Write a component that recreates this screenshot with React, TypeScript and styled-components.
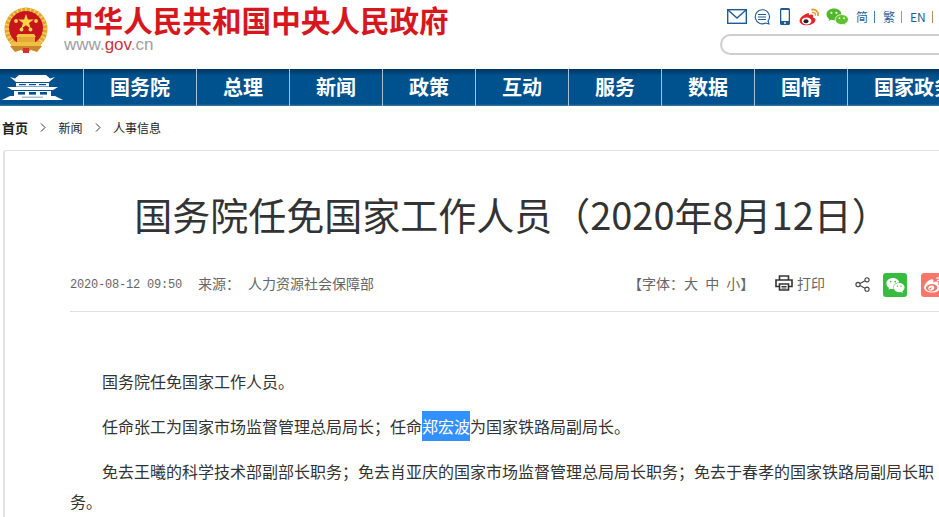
import {createGlobalStyle, styled} from "styled-components";
import {FaWeibo, FaWeixin} from "react-icons/fa";

const CJK = `"Noto Sans CJK SC", "Liberation Sans", sans-serif`;

const GlobalStyle = createGlobalStyle`
    html, body {
        margin: 0;
        padding: 0;
        background: #fff;
        overflow: hidden;
        font-family: ${CJK};
    }
`

const Page = styled.div`
    width: 939px;
    height: 517px;
    overflow: hidden;
`

const Wide = styled.div`
    width: 1012px;
`

const Header = styled.header`
    height: 69px;
    display: flex;
`

const Brand = styled.div`
    display: flex;
    flex: none;
    width: 720px;
    padding-left: 4px;
    box-sizing: border-box;
`

const EmblemBox = styled.div`
    padding-top: 7px;
    flex: none;
`

const Titles = styled.div`
    margin-left: 16px;
    padding-top: 2px;
`

const SiteName = styled.div`
    font-size: 29.6px;
    line-height: 36px;
    font-weight: 700;
    color: #d7161d;
    white-space: nowrap;
`

const SiteUrl = styled.div`
    font-family: "Liberation Sans", sans-serif;
    font-size: 17px;
    line-height: 14px;
    color: #a0a0a0;

    b {
        font-weight: 400;
        color: #c9343a;
    }
`

const Tools = styled.div`
    flex: none;
    width: 292px;
    padding-top: 7px;
`

const ToolRow = styled.div`
    height: 19px;
    display: flex;
    align-items: center;
    padding-left: 7px;
`

const ToolIcon = styled.svg<{$gap: number}>`
    display: block;
    flex: none;
    margin-right: ${(p) => p.$gap}px;
`

const Lang = styled.span`
    font-size: 12px;
    line-height: 19px;
    color: #1f5c94;
    width: 27px;
    flex: none;
`

const LangBar = styled.span<{$color: string}>`
    display: inline-block;
    width: 1px;
    height: 12px;
    margin-left: 6px;
    background: ${(p) => p.$color};
    vertical-align: -1px;
`

const SearchBox = styled.div`
    margin-top: 8px;
    height: 17px;
    width: 280px;
    border: 2px solid #cfcfcf;
    border-radius: 11px;
`

const Nav = styled.nav`
    height: 37px;
    display: flex;
    background: linear-gradient(#00345f 0, #00528f 7px, #00528f 35px, #3d7cab 37px);
`

const NavHome = styled.div`
    width: 83px;
    flex: none;
    padding: 6px 0 0 2px;
    box-sizing: border-box;
`

const NavItem = styled.div<{$width: number}>`
    width: ${(p) => p.$width}px;
    flex: none;
    border-left: 1px solid #a9bfd2;
    color: #fff;
    font-size: 20px;
    font-weight: 700;
    line-height: 35px;
    text-align: center;
    white-space: nowrap;
`

const Crumbs = styled.div`
    height: 42px;
    padding: 0 0 2px 2px;
    display: flex;
    align-items: center;
    font-size: 12px;
    color: #222;
`

const CrumbFirst = styled.span`
    font-size: 13px;
    font-weight: 700;
`

const Chevron = styled.svg`
    display: block;
    margin: 0 12.5px 0 12px;
`

const Card = styled.main`
    margin-left: 3px;
    width: 1008px;
    height: 400px;
    border: solid #e2e2e2;
    border-width: 1px 0 0 2px;
    border-radius: 3px 0 0 0;
    box-sizing: border-box;
    padding: 0 0 0 65px;
`

const Inner = styled.div`
    width: 874px;
`

const Title = styled.h1`
    margin: 0;
    padding: 34px 0 0 10px;
    height: 58px;
    line-height: 58px;
    font-size: 38px;
    font-weight: 400;
    color: #333;
    text-align: center;
    white-space: nowrap;
    box-sizing: content-box;
`

const Meta = styled.div`
    margin-top: 30px;
    height: 38px;
    border-bottom: 1px solid #e0e0e0;
    display: flex;
    align-items: flex-start;
    color: #666;
    font-size: 14px;
    line-height: 20px;
    box-sizing: content-box;
`

const MetaLeft = styled.div`
    width: 558px;
    flex: none;
    display: flex;
    white-space: nowrap;
`

const MetaDate = styled.span`
    font-family: "Liberation Mono", monospace;
    font-size: 12px;
    line-height: 24px;
    letter-spacing: -0.2px;
    width: 128px;
    flex: none;
`

const Source = styled.span`
    margin-left: 8px;
`

const FontSwitch = styled.div`
    width: 147px;
    flex: none;
    white-space: nowrap;
    word-spacing: 4px;
`

const Print = styled.div`
    width: 80px;
    flex: none;
    display: flex;
    align-items: center;
    gap: 4px;
`

const ShareGlyph = styled.svg`
    display: block;
    margin: 4px 13px 0 0;
    flex: none;
`

const SocialButton = styled.div<{$bg: string}>`
    width: 24px;
    height: 24px;
    flex: none;
    margin-right: 14px;
    border-radius: 3px;
    background: ${(p) => p.$bg};
    color: #fff;
    display: flex;
    align-items: center;
    justify-content: center;
    font-size: 19px;
`

const Article = styled.article`
    margin-top: 54px;
`

const Para = styled.p`
    margin: 0 0 15px;
    font-size: 16px;
    line-height: 30px;
    color: #333;
    text-indent: 32px;
`

const Selected = styled.span`
    display: inline-block;
    text-indent: 0;
    background: #3390ff;
    color: #fff;
`

function Emblem() {
    const rays = Array.from({length: 28}, (_, i) => (i * 360) / 28);
    return (
        <svg width="44" height="47" viewBox="0 0 44 47" style={{display: "block"}}>
            <ellipse cx="22" cy="22" rx="21.5" ry="21.5" fill="#e0a52c" />
            {rays.map((r) => (
                <rect key={r} x="21.3" y="0.5" width="1.4" height="5" fill="#f5d36a" transform={`rotate(${r} 22 22)`} />
            ))}
            <circle cx="22" cy="21" r="17" fill="#c8141c" />
            <polygon points="22,7 23.9,12.6 29.8,12.6 25,16.1 26.8,21.7 22,18.2 17.2,21.7 19,16.1 14.2,12.6 20.1,12.6" fill="#f8d648" />
            <circle cx="12" cy="14" r="1.9" fill="#f8d648" />
            <circle cx="32" cy="14" r="1.9" fill="#f8d648" />
            <circle cx="17.5" cy="22.5" r="1.9" fill="#f8d648" />
            <circle cx="26.5" cy="22.5" r="1.9" fill="#f8d648" />
            <polygon points="14,27 30,27 32,30 12,30" fill="#f2c544" />
            <rect x="13" y="30" width="18" height="5" fill="#e3ab33" />
            <rect x="7" y="35" width="30" height="4" fill="#f0bf45" />
            <path d="M6 39 L38 39 L33 45 L27 43 L22 46 L17 43 L11 45 Z" fill="#c9862a" />
            <rect x="19" y="41" width="6" height="5" fill="#d3322c" />
        </svg>
    );
}

function Gate() {
    return (
        <svg width="61" height="25" viewBox="0 0 61 25" style={{display: "block"}}>
            <path d="M8 2 L13 3.5 L17 0 L44 0 L48 3.5 L53 2 L47 7 L14 7 Z" fill="#fff" />
            <path d="M14 8 H47 V11.5 H14 Z" fill="#fff" />
            <rect x="17" y="9" width="7" height="1.2" fill="#00528f" />
            <rect x="27" y="9" width="7" height="1.2" fill="#00528f" />
            <rect x="37" y="9" width="7" height="1.2" fill="#00528f" />
            <path d="M5 12 H56 L51 15 H10 Z" fill="#fff" />
            <path d="M12 16 H49 V21 H12 Z" fill="#fff" />
            <rect x="16" y="17" width="7" height="2.6" fill="#00528f" />
            <rect x="27" y="17" width="7" height="2.6" fill="#00528f" />
            <rect x="38" y="17" width="7" height="2.6" fill="#00528f" />
            <path d="M8 21 H53 L61 25 H0 Z" fill="#fff" />
            <rect x="20" y="21.6" width="21" height="1.2" fill="#8eb2cd" />
        </svg>
    );
}

function WeiboColor() {
    return (
        <ToolIcon $gap={6} width="21" height="18" viewBox="0 0 21 18">
            <path d="M8.6 5.2 C3.8 7 0.4 10.3 0.6 13 C0.8 16 4.4 17.6 8.4 17.3 C13 17 16.6 14.6 16.4 11.8 C16.3 10.4 15 9.8 14 9.5 C14.6 7.8 14 6.7 12.6 6.6 C11.6 6.5 10.6 6.9 9.9 7.2 C10.2 5.4 9.8 4.8 8.6 5.2 Z" fill="#e2262a" />
            <ellipse cx="7.6" cy="13" rx="4.8" ry="3.4" fill="#fff" />
            <ellipse cx="7" cy="13.2" rx="2.5" ry="2" fill="#222" />
            <path d="M13 1.6 C16.6 1 19.6 3.8 19 7.4" fill="none" stroke="#ef9a2f" strokeWidth="1.8" strokeLinecap="round" />
            <path d="M13.6 4.4 C15.4 4.2 16.6 5.4 16.4 7" fill="none" stroke="#ef9a2f" strokeWidth="1.5" strokeLinecap="round" />
        </ToolIcon>
    );
}

function WechatColor() {
    return (
        <ToolIcon $gap={7} width="23" height="18" viewBox="0 0 23 18">
            <path d="M8 0.5 C3.8 0.5 0.5 3.1 0.5 6.4 C0.5 8.3 1.6 9.9 3.2 11 L2.5 13 L5 11.8 C6 12.1 7 12.3 8 12.3 C12.2 12.3 15.4 9.7 15.4 6.4 C15.4 3.1 12.2 0.5 8 0.5 Z" fill="#51b62c" />
            <path d="M15.6 6.6 C12 6.6 9.2 8.8 9.2 11.6 C9.2 14.4 12 16.6 15.6 16.6 C16.3 16.6 17 16.5 17.7 16.3 L20 17.6 L19.4 15.5 C21.2 14.6 22.4 13.2 22.4 11.6 C22.4 8.8 19.4 6.6 15.6 6.6 Z" fill="#5cc22f" stroke="#fff" strokeWidth="0.8" />
            <circle cx="5.4" cy="4.8" r="1.1" fill="#fff" />
            <circle cx="10.4" cy="4.8" r="1.1" fill="#fff" />
            <circle cx="13.4" cy="10.2" r="0.9" fill="#fff" />
            <circle cx="18" cy="10.2" r="0.9" fill="#fff" />
        </ToolIcon>
    );
}

function PrinterGlyph() {
    return (
        <svg width="18" height="16" viewBox="0 0 18 16" fill="none" stroke="#333" strokeWidth="1.6">
            <path d="M4.5 5 V1 H13.5 V5" />
            <path d="M4 11.5 H1 V5 H17 V11.5 H14" />
            <path d="M4.5 9 H13.5 V15 H4.5 Z" />
            <path d="M6.5 11.5 H11.5" strokeWidth="1" />
            <path d="M6.5 13 H11.5" strokeWidth="1" />
        </svg>
    );
}

const navItems = [
    {label: "国务院", width: 112},
    {label: "总理", width: 92},
    {label: "新闻", width: 92},
    {label: "政策", width: 92},
    {label: "互动", width: 92},
    {label: "服务", width: 92},
    {label: "数据", width: 92},
    {label: "国情", width: 92},
    {label: "国家政务", width: 132},
];

export default function App() {
    return (
        <>
            <GlobalStyle />
            <Page>
                <Wide>
                    <Header>
                        <Brand>
                            <EmblemBox><Emblem /></EmblemBox>
                            <Titles>
                                <SiteName>中华人民共和国中央人民政府</SiteName>
                                <SiteUrl>www.<b>gov</b>.cn</SiteUrl>
                            </Titles>
                        </Brand>
                        <Tools>
                            <ToolRow>
                                <ToolIcon $gap={7} width="20" height="15" viewBox="0 0 20 15" fill="none" stroke="#1f5c94" strokeWidth="1.4">
                                    <rect x="0.7" y="0.7" width="18.6" height="13.6" />
                                    <path d="M1 1 L10 9 L19 1" />
                                </ToolIcon>
                                <ToolIcon $gap={10} width="16" height="16" viewBox="0 0 16 16" fill="none" stroke="#1f5c94" strokeWidth="1.1">
                                    <path d="M8 0.8 A7 7 0 1 0 11.5 14 L15 15 L14 12 A7 7 0 0 0 8 0.8 Z" />
                                    <path d="M4 5.5 H12 M4 8 H12 M4 10.5 H12" />
                                </ToolIcon>
                                <ToolIcon $gap={9} width="10" height="17" viewBox="0 0 10 17">
                                    <rect x="0" y="0" width="10" height="17" rx="1.5" fill="#1f5c94" />
                                    <rect x="1.3" y="2" width="7.4" height="11" fill="#fff" />
                                    <circle cx="5" cy="15" r="0.9" fill="#fff" />
                                </ToolIcon>
                                <WeiboColor />
                                <WechatColor />
                                <Lang>简<LangBar $color="#3f7fb5" /></Lang>
                                <Lang>繁<LangBar $color="#e28a2c" /></Lang>
                                <Lang>EN<LangBar $color="#b58a5e" /></Lang>
                            </ToolRow>
                            <SearchBox />
                        </Tools>
                    </Header>
                    <Nav>
                        <NavHome><Gate /></NavHome>
                        {navItems.map((item) => (
                            <NavItem key={item.label} $width={item.width}>{item.label}</NavItem>
                        ))}
                    </Nav>
                    <Crumbs>
                        <CrumbFirst>首页</CrumbFirst>
                        <Chevron width="6" height="9" viewBox="0 0 6 9" fill="none" stroke="#333"><path d="M1 0.5 L5 4.5 L1 8.5" /></Chevron>
                        <span>新闻</span>
                        <Chevron width="6" height="9" viewBox="0 0 6 9" fill="none" stroke="#333"><path d="M1 0.5 L5 4.5 L1 8.5" /></Chevron>
                        <span>人事信息</span>
                    </Crumbs>
                    <Card>
                        <Inner>
                            <Title>国务院任免国家工作人员（2020年8月12日）</Title>
                            <Meta>
                                <MetaLeft>
                                    <MetaDate>2020-08-12 09:50</MetaDate>
                                    <span>来源：</span>
                                    <Source>人力资源社会保障部</Source>
                                </MetaLeft>
                                <FontSwitch>【字体：大 中 小】</FontSwitch>
                                <Print><PrinterGlyph />打印</Print>
                                <ShareGlyph width="15" height="15" viewBox="0 0 15 15" fill="none" stroke="#444" strokeWidth="1.1">
                                    <circle cx="3" cy="7.5" r="2.1" />
                                    <circle cx="12" cy="2.8" r="2.1" />
                                    <circle cx="12" cy="12.2" r="2.1" />
                                    <path d="M5 6.5 L10 3.8 M5 8.5 L10 11.2" />
                                </ShareGlyph>
                                <SocialButton $bg="#37bc3f"><FaWeixin /></SocialButton>
                                <SocialButton $bg="#f8766a"><FaWeibo /></SocialButton>
                            </Meta>
                            <Article>
                                <Para>国务院任免国家工作人员。</Para>
                                <Para>任命张工为国家市场监督管理总局局长；任命<Selected>郑宏波</Selected>为国家铁路局副局长。</Para>
                                <Para>免去王曦的科学技术部副部长职务；免去肖亚庆的国家市场监督管理总局局长职务；免去于春孝的国家铁路局副局长职务。</Para>
                            </Article>
                        </Inner>
                    </Card>
                </Wide>
            </Page>
        </>
    );
}
